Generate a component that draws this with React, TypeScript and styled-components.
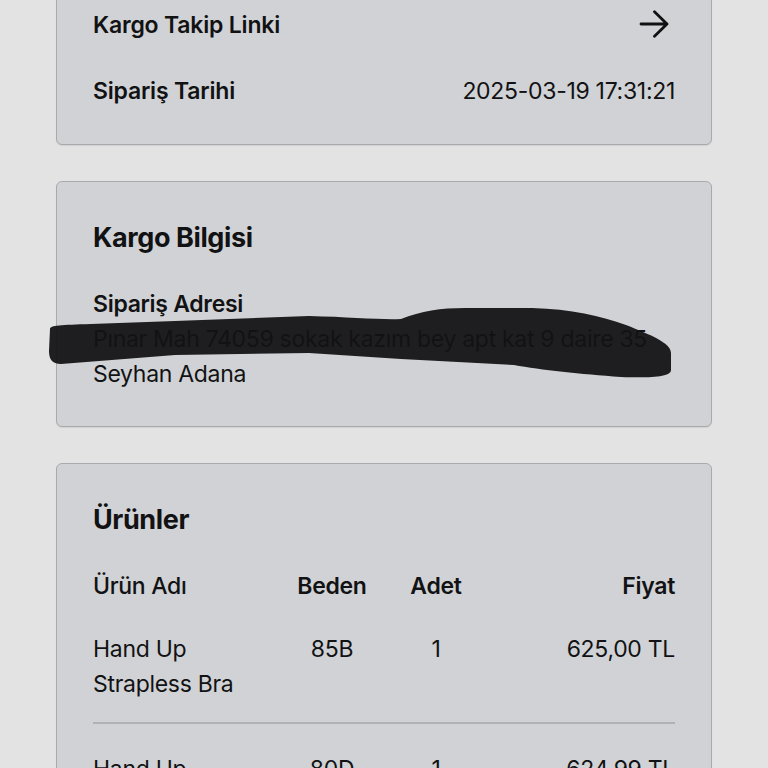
import React from "react";
import styled, { createGlobalStyle } from "styled-components";

const GlobalStyle = createGlobalStyle`
  html, body {
    margin: 0;
    padding: 0;
    background: #e3e3e4;
    color: #121214;
    font-family: Inter, "Noto Sans", "Liberation Sans", sans-serif;
  }
`;

// the view is scrolled: the first card's top edge sits just above the frame
const Page = styled.main`
  display: flex;
  flex-direction: column;
  gap: 36px;
  padding: 0 56px 40px;
  margin-top: -30px;
`;

const Card = styled.section`
  position: relative;
  display: flex;
  flex-direction: column;
  padding: 36px 36px 34px;
  background: #d1d2d5;
  border: 1px solid #a9aaae;
  border-radius: 6px;
  box-shadow: 0 1px 1px rgba(0, 0, 0, 0.08);
`;

const InfoList = styled.div`
  display: flex;
  flex-direction: column;
  gap: 31px;
  margin-bottom: 2px;
`;

const InfoRow = styled.div`
  display: flex;
  align-items: center;
  justify-content: space-between;
  height: 35px;
  font-size: 23px;
`;

const Label = styled.span`
  font-weight: 600;
  letter-spacing: -0.2px;
`;

const Value = styled.span`
  font-weight: 400;
  letter-spacing: -0.3px;
`;

const ArrowBox = styled.span`
  display: flex;
  margin-right: 6px;
  margin-top: -2px;
`;

const Title = styled.h2`
  margin: 0 0 29px;
  font-size: 27px;
  line-height: 40px;
  font-weight: 700;
  letter-spacing: -0.4px;
`;

const Address = styled.div`
  font-size: 23px;
  line-height: 35px;
  letter-spacing: -0.3px;
`;

const Line = styled.div<{ $bold?: boolean }>`
  font-weight: ${(p) => (p.$bold ? 600 : 400)};
  white-space: nowrap;
`;

const Scribble = styled.svg`
  position: absolute;
  left: -16px;
  top: 119px;
  width: 640px;
  height: 90px;
  pointer-events: none;
`;

const Grid = styled.div<{ $head?: boolean }>`
  display: grid;
  grid-template-columns: 187px 104px 104px 1fr;
  align-items: start;
  font-size: 23px;
  line-height: 35px;
  letter-spacing: -0.3px;
  padding: ${(p) => (p.$head ? "0" : "28px 0 20px")};
  border-bottom: ${(p) => (p.$head ? "none" : "2px solid #b1b2b6")};
  font-weight: ${(p) => (p.$head ? 600 : 400)};
`;

const Cell = styled.div<{ $align?: "left" | "center" | "right"; $weight?: number }>`
  text-align: ${(p) => p.$align || "left"};
  ${(p) => (p.$weight ? `font-weight: ${p.$weight};` : "")}
`;

const Arrow = () => (
  <svg width="30" height="28" viewBox="0 0 30 28" fill="none">
    <path
      d="M2 14H28M15.5 1.8L28 14L15.5 26.2"
      stroke="#111"
      strokeWidth="2.8"
      strokeLinecap="round"
      strokeLinejoin="round"
    />
  </svg>
);

const products = [
  { name: "Hand Up Strapless Bra", size: "85B", qty: 1, price: "625,00 TL" },
  { name: "Hand Up Strapless Bra", size: "80D", qty: 1, price: "624,99 TL" },
];

export default function App() {
  return (
    <>
      <GlobalStyle />
      <Page>
        <Card>
          <InfoList>
            <InfoRow>
              <Label>Kargo Takip Linki</Label>
              <ArrowBox>
                <Arrow />
              </ArrowBox>
            </InfoRow>
            <InfoRow>
              <Label>Sipariş Tarihi</Label>
              <Value>2025-03-19 17:31:21</Value>
            </InfoRow>
          </InfoList>
        </Card>

        <Card>
          <Title>Kargo Bilgisi</Title>
          <Address>
            <Line $bold>Sipariş Adresi</Line>
            <Line>Pınar Mah 74059 sokak kazım bey apt kat 9 daire 35</Line>
            <Line>Seyhan Adana</Line>
          </Address>
          <Scribble viewBox="0 0 640 90">
            <path
              d="M9 28C9 24 20 24 50 23L134 20L268 15C310 16 340 19 360 18C380 10 400 7 424 7L491 7C530 8 560 15 585 24C610 34 630 42 630 52L630 69C630 76 610 77 580 76C540 73 500 69 473 64L360 58L268 52L134 54L20 63C11 63 8 58 8 50Z"
              fill="#121214"
              fillOpacity="0.94"
            />
          </Scribble>
        </Card>

        <Card>
          <Title>Ürünler</Title>
          <Grid $head>
            <Cell $weight={500}>Ürün Adı</Cell>
            <Cell $align="center">Beden</Cell>
            <Cell $align="center">Adet</Cell>
            <Cell $align="right">Fiyat</Cell>
          </Grid>
          {products.map((p, i) => (
            <Grid key={i}>
              <Cell>{p.name}</Cell>
              <Cell $align="center">{p.size}</Cell>
              <Cell $align="center">{p.qty}</Cell>
              <Cell $align="right">{p.price}</Cell>
            </Grid>
          ))}
        </Card>
      </Page>
    </>
  );
}
